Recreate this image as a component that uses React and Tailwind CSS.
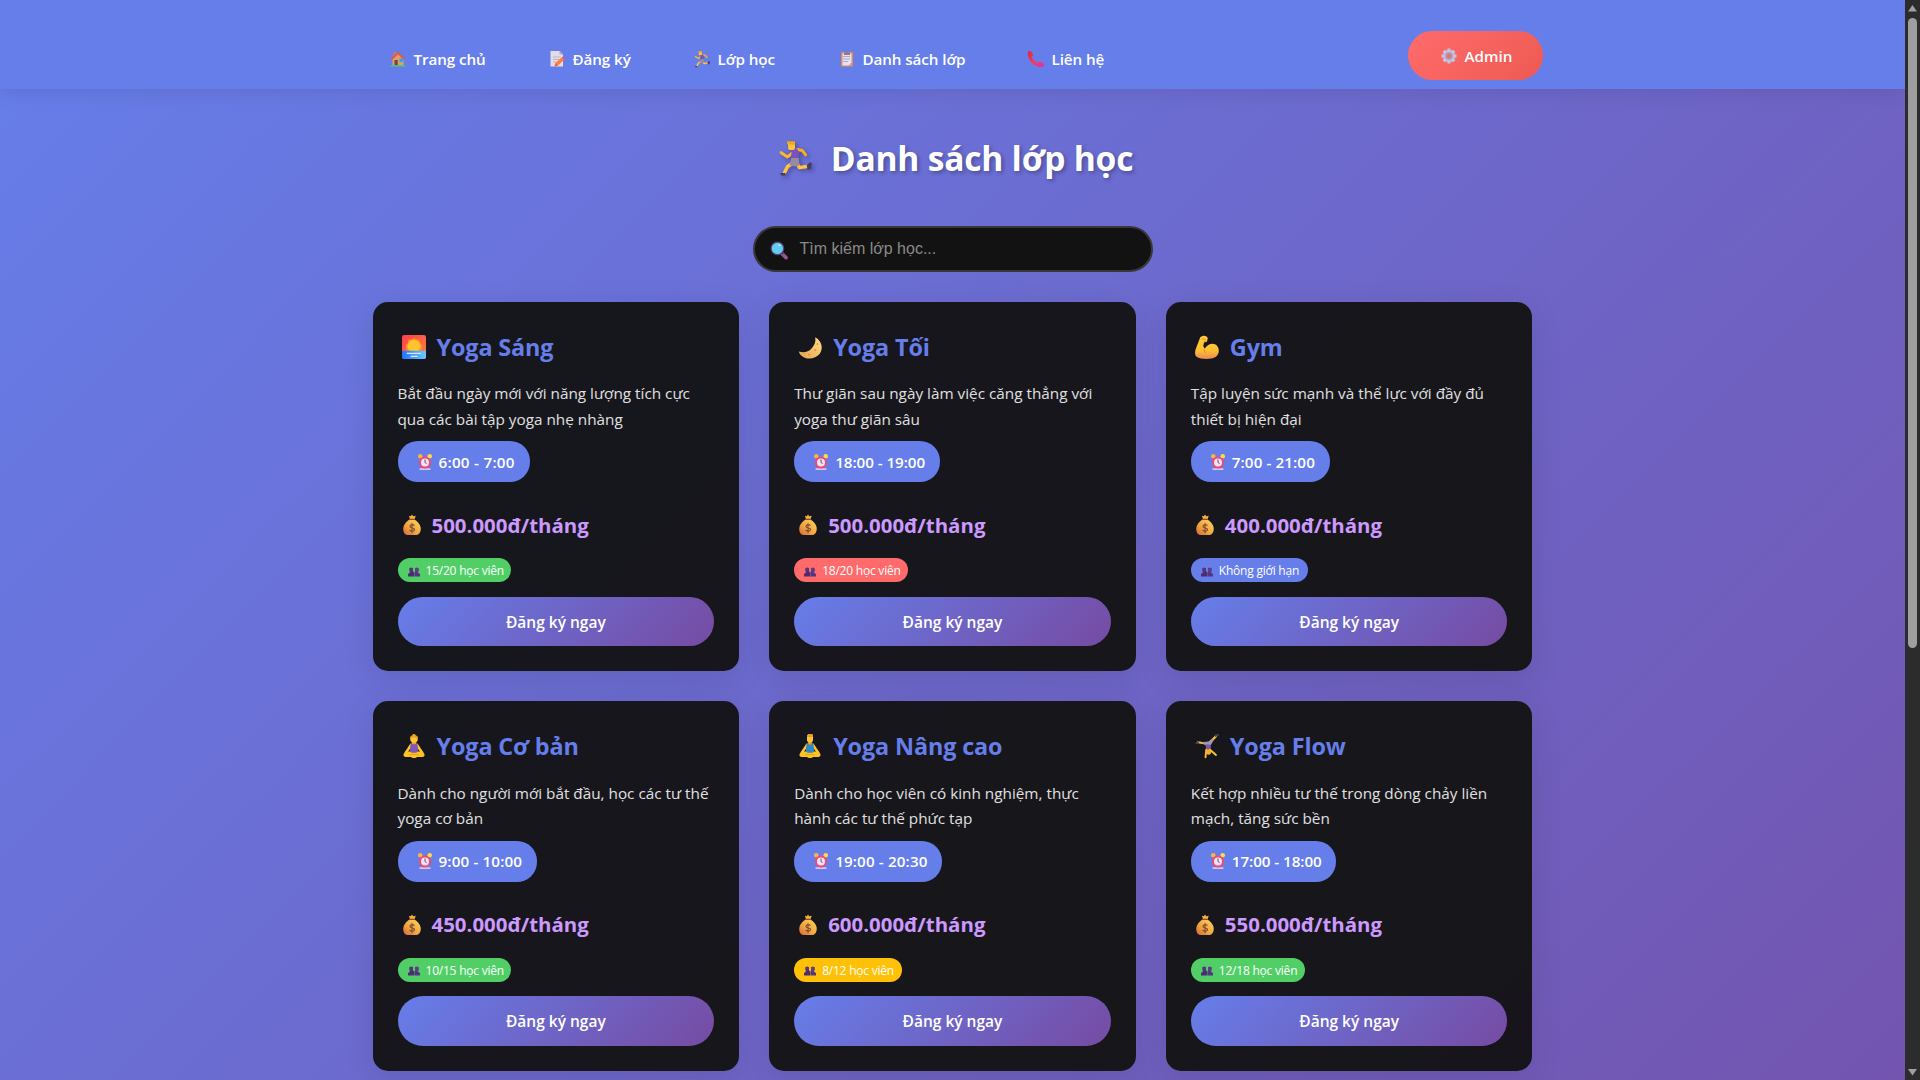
import React from "react";

const P = {
  home: (
    <>
      <rect x="7" y="2" width="5" height="9" fill="#b98064" />
      <path d="M5 14 16 5l11 9v15H5z" fill="#dba06d" />
      <path d="m2 15 14-13 14 13-2.400 2.400L16 6.800 4.400 17.400z" fill="#ee5338" />
      <rect x="9" y="18" width="6.500" height="11" fill="#7d4533" />
      <rect x="19" y="15" width="7" height="7" fill="#25a9ef" />
      <rect x="1" y="28.500" width="30" height="2.500" rx="1" fill="#37d67a" />
    </>
  ),
  memo: (
    <>
      <path d="M3 0h18l7 7v24H3z" fill="#e2dce9" />
      <path d="M21 0l7 7h-7z" fill="#b3a9c1" />
      <path d="M8 12h15M8 17h13M8 22h7" stroke="#b9afc5" strokeWidth="1.800" />
      <path d="m13 24 12-11 5 5-12 11-7 2z" fill="#ff8139" />
      <path d="m25 13 3-2 4 4-2 3z" fill="#f2546b" />
      <path d="m13 24 5 5-7 2z" fill="#e9604a" />
    </>
  ),
  run: (
    <>
      <path d="m14 11-5 4-6-4" fill="none" stroke="#ffb82e" strokeWidth="2.800" strokeLinecap="round" strokeLinejoin="round" />
      <path d="m18 8 5 1 3 4" fill="none" stroke="#f9ac25" strokeWidth="2.800" strokeLinecap="round" strokeLinejoin="round" />
      <path d="m14 21-5 3-3 6" fill="none" stroke="#ffc43c" strokeWidth="3.200" strokeLinecap="round" strokeLinejoin="round" />
      <path d="m18 21 2 4 7-1" fill="none" stroke="#ffc43c" strokeWidth="3.200" strokeLinecap="round" strokeLinejoin="round" />
      <path d="m13 8 5-1 2 4-1 6-7 0z" fill="#7a52b8" />
      <path d="m12.500 16 7 0 .5 7-3 1-6-1z" fill="#968b9f" />
      <path d="m2 30 5 0 0 2.500H3zM27 23l3-3 2 1-1 5-3 1z" fill="#483b69" />
      <rect x="9.500" y="1" width="6.500" height="7.500" rx="2.500" fill="#ffc23a" />
      <path d="M8.500 3V.3H16V3.500z" fill="#f3a51f" />
    </>
  ),
  clip: (
    <>
      <rect x="4" y="2" width="24" height="29" rx="1" fill="#d98e57" />
      <path d="M7 5h18v18l-5 6H7z" fill="#e8dff0" />
      <path d="M25 23v6h-5z" fill="#b9abc9" />
      <path d="M8 11h14M8 16h14M8 21h10" stroke="#ad9fbe" strokeWidth="1.800" />
      <path d="M10 3h4l1-3h3l1 3h3v5H10z" fill="#8b7998" />
    </>
  ),
  phone: (
    <>
      <defs>
        <linearGradient id="handset" x1="0" y1="0" x2="1" y2="1">
          <stop stopColor="#dd2442" />
          <stop offset=".5" stopColor="#f0405f" />
          <stop offset="1" stopColor="#e02fae" />
        </linearGradient>
      </defs>
      <path
        d="M2 0c4 0 8 5 8 8 0 2-3 3-2 5 2 4 6 8 10 10 2 1 3-2 5-2 4 0 9 4 9 8-1 4-9 4-13 2C9 27 2 19 0 10-.5 6-1 1 2 0z"
        fill="url(#handset)"
      />
    </>
  ),
  gear: (
    <>
      <path
        d="M13 1h6l1 5 4-3 5 5-3 4 5 1v6l-5 1 3 4-5 5-4-3-1 5h-6l-1-5-4 3-5-5 3-4-5-1v-6l5-1-3-4 5-5 4 3z"
        fill="#c9c0da"
      />
      <circle cx="16" cy="16" r="7.500" fill="#a69cb5" />
      <circle cx="16" cy="16" r="4" fill="#f46a68" />
    </>
  ),
  search: (
    <>
      <path d="m19 20 8 8" stroke="#97568f" strokeWidth="6" strokeLinecap="round" />
      <path d="m18 18 4 4" stroke="#57366b" strokeWidth="4" />
      <circle cx="12.500" cy="12.500" r="10.500" fill="#62cdf0" stroke="#504878" strokeWidth="2" />
      <ellipse cx="16" cy="7" rx="2" ry="1.500" fill="#b6effc" />
    </>
  ),
  sunrise: (
    <>
      <defs>
        <linearGradient id="dawn" x1="0" y1="0" x2="1" y2="1">
          <stop stopColor="#ff3e4b" />
          <stop offset="1" stopColor="#ff8243" />
        </linearGradient>
        <linearGradient id="sea">
          <stop stopColor="#1b76ff" />
          <stop offset="1" stopColor="#68caff" />
        </linearGradient>
      </defs>
      <rect width="32" height="32" rx="3" fill="url(#dawn)" />
      <path d="m16 4 3 2 4 0 1 4 3 4-1 7H6l-1-7 3-4 1-4h4z" fill="#ff941f" />
      <circle cx="16" cy="15" r="8.500" fill="#ffc42e" />
      <path d="M0 21h32v8a3 3 0 0 1-3 3H3a3 3 0 0 1-3-3z" fill="url(#sea)" />
      <path d="M7 24.500h18M12 28.500h8" stroke="#e7dcff" strokeWidth="1.500" strokeLinecap="round" />
    </>
  ),
  moon: (
    <>
      <defs>
        <linearGradient id="moonlight" x1="0" y1="1" x2="1" y2="0">
          <stop stopColor="#e8a354" />
          <stop offset="1" stopColor="#ffdc83" />
        </linearGradient>
      </defs>
      <path d="M23 3c9 5 11 15 6 22-7 9-24 9-28-3 6 2 13 1 17-4 4-4 6-9 5-15z" fill="url(#moonlight)" />
      <g fill="#d99745">
        <circle cx="26" cy="12" r="1.300" />
        <circle cx="23" cy="20" r="1.500" />
        <circle cx="15" cy="26" r="1.500" />
        <circle cx="9" cy="25" r="1" />
      </g>
    </>
  ),
  arm: (
    <>
      <defs>
        <linearGradient id="skin" x1="0" y1="0" x2="0" y2="1">
          <stop stopColor="#ffcf35" />
          <stop offset=".65" stopColor="#ffbd32" />
          <stop offset="1" stopColor="#e8895a" />
        </linearGradient>
      </defs>
      <path
        d="M7 3c3-3 8-3 10 1l-1 5-4 1-1 5 2 3c4-6 10-8 15-5 5 4 5 12 0 16-6 4-20 4-26 0-3-3-2-8 0-13z"
        fill="url(#skin)"
      />
      <path d="M13 18c-1 2-1 4 1 6M9 5l5 1M12 9l3-1" stroke="#e28b25" strokeWidth="1.300" fill="none" />
    </>
  ),
  lotusWoman: (
    <>
      <path d="M12 14.500 8.500 20 5 25M20 14.500l3.500 5.500 3.500 5" fill="none" stroke="#ffc62f" strokeWidth="3.400" strokeLinecap="round" strokeLinejoin="round" />
      <path d="M2 27c1-3 7-4 10-4h8c3 0 9 1 10 4 .5 2-1 3.500-3 3.500h-7L18 32h-4l-2-1.500H5c-2 0-3.500-1.500-3-3.500z" fill="#ffc321" />
      <path d="M11.500 13h9l1 10-2.500 2h-6l-2.500-2z" fill="#8057b7" />
      <path d="M13 9h6v4.500h-6z" fill="#f0a21c" />
      <ellipse cx="16" cy="6.800" rx="5" ry="5" fill="#ffc43b" />
      <path d="M11 7c-1-3 1-5 3-5.500 0-2 4-2 4 0 2 .5 4 2.500 3 5.500-3-3-7-3-10 0z" fill="#e8a31d" />
      <path d="m10 28 6-1 6 1" stroke="#dd941d" fill="none" />
    </>
  ),
  lotusMan: (
    <>
      <path d="M12 14.500 8.500 20 5 25M20 14.500l3.500 5.500 3.500 5" fill="none" stroke="#ffc62f" strokeWidth="3.400" strokeLinecap="round" strokeLinejoin="round" />
      <path d="M2 27c1-3 7-4 10-4h8c3 0 9 1 10 4 .5 2-1 3.500-3 3.500h-7L18 32h-4l-2-1.500H5c-2 0-3.500-1.500-3-3.500z" fill="#ffc321" />
      <path d="M11.500 13l2-1 2.500 3 2.500-3 2 1 1 10-2 2h-7l-2-2z" fill="#2d89c9" />
      <path d="M13.500 8h5v5L16 15l-2.500-2z" fill="#f0a21c" />
      <rect x="12" y="0" width="8" height="11" rx="3.500" fill="#ffc43b" />
      <path d="M12 4V1.500L14 0h5l1 1.500V4z" fill="#e8a31d" />
      <path d="m10 28 6-1 6 1" stroke="#dd941d" fill="none" />
    </>
  ),
  wheel: (
    <>
      <path d="m16 13-12-2M19 12l9-9" stroke="#ffc22f" strokeWidth="3" strokeLinecap="round" />
      <path d="m8 11 10-1 5-4 2 2-4 7h-7z" fill="#a19aaf" />
      <path d="M14 14h7v8h-6z" fill="#8055b2" />
      <path d="m15 21-1 10M20 21l8 7" stroke="#ffc22f" strokeWidth="2.500" strokeLinecap="round" />
      <circle cx="18" cy="24" r="3.500" fill="#f7b126" />
      <path d="m0 12 5-3v4H1zM26 1l6-1v2l-5 2z" fill="#4c3f68" />
    </>
  ),
  clock: (
    <>
      <circle cx="6.500" cy="4.500" r="4.500" fill="#f9b443" />
      <circle cx="25.500" cy="4.500" r="4.500" fill="#ffdb45" />
      <rect x="5" y="28.500" width="22" height="3.500" rx="1" fill="#dcc5eb" />
      <circle cx="16" cy="17" r="12" fill="#f4496c" />
      <circle cx="16" cy="17" r="8" fill="#f1e3fa" />
      <path d="M16 11v6l3 2" stroke="#6a4578" strokeWidth="2" fill="none" />
    </>
  ),
  money: (
    <>
      <defs>
        <linearGradient id="sack" x1="1" y1="0" x2="0" y2="1">
          <stop stopColor="#ffd45b" />
          <stop offset=".6" stopColor="#f0a33c" />
          <stop offset="1" stopColor="#d0653f" />
        </linearGradient>
      </defs>
      <path d="M11 1l3 1 2-3 2 3 4-1-2 6h-7z" fill="#f6ad3b" />
      <path d="M11 6h10v3H11z" fill="#825043" />
      <path d="M11 8h10c5 3 9 9 9 14 0 7-4 10-8 10H10c-5 0-8-3-8-10 0-5 4-11 9-14z" fill="url(#sack)" />
      <path d="M20 17c-3-3-8-1-7 2s7 1 7 4-5 4-8 1M16 13v16" stroke="#84503b" strokeWidth="2" fill="none" />
    </>
  ),
  users: (
    <>
      <path d="M4 5h9v8l3 4v11H0v-7l5-4z" fill="#4c2d72" />
      <path d="M19 5h9v9l-2 3 6 4v7H17V17l3-4z" fill="#533580" />
      <rect x="4" y="4" width="9" height="12" rx="4" fill="#53357b" />
      <rect x="19" y="4" width="9" height="12" rx="4" fill="#5e3d88" />
    </>
  ),
};

function Emoji({ name, className }) {
  return (
    <svg viewBox="0 0 32 32" className={"block shrink-0 overflow-visible " + className} aria-hidden="true">
      {P[name]}
    </svg>
  );
}

const nav = [
  { icon: "home", label: "Trang chủ", item: "w-[159px]" },
  { icon: "memo", label: "Đăng ký", item: "w-[145px]" },
  { icon: "run", label: "Lớp học", item: "w-[145px]" },
  { icon: "clip", label: "Danh sách lớp", item: "w-[189px]" },
  { icon: "phone", label: "Liên hệ", item: "w-[100px]" },
];

const green = "bg-[#51cf66]";
const classes = [
  { icon: "sunrise", name: "Yoga Sáng", lines: ["Bắt đầu ngày mới với năng lượng tích cực", "qua các bài tập yoga nhẹ nhàng"], time: "6:00 - 7:00", timeW: "w-[132px]", timeT: "tracking-[0.28px]", price: "500.000đ/tháng", seats: "15/20 học viên", seatW: "w-[113px]", tone: green },
  { icon: "moon", name: "Yoga Tối", lines: ["Thư giãn sau ngày làm việc căng thẳng với", "yoga thư giãn sâu"], time: "18:00 - 19:00", timeW: "w-[146px]", timeT: "tracking-[-0.05px]", price: "500.000đ/tháng", seats: "18/20 học viên", seatW: "w-[114px]", tone: "bg-[#ff6b6b]" },
  { icon: "arm", name: "Gym", lines: ["Tập luyện sức mạnh và thể lực với đầy đủ", "thiết bị hiện đại"], time: "7:00 - 21:00", timeW: "w-[139px]", timeT: "tracking-[0.1px]", price: "400.000đ/tháng", seats: "Không giới hạn", seatW: "w-[117px]", tone: "bg-[#667eea]" },
  { icon: "lotusWoman", name: "Yoga Cơ bản", lines: ["Dành cho người mới bắt đầu, học các tư thế", "yoga cơ bản"], time: "9:00 - 10:00", timeW: "w-[139px]", timeT: "tracking-[0.15px]", price: "450.000đ/tháng", seats: "10/15 học viên", seatW: "w-[113px]", tone: green },
  { icon: "lotusMan", name: "Yoga Nâng cao", lines: ["Dành cho học viên có kinh nghiệm, thực", "hành các tư thế phức tạp"], time: "19:00 - 20:30", timeW: "w-[148px]", timeT: "tracking-[0.14px]", price: "600.000đ/tháng", seats: "8/12 học viên", seatW: "w-[108px]", tone: "bg-[#ffc107]" },
  { icon: "wheel", name: "Yoga Flow", lines: ["Kết hợp nhiều tư thế trong dòng chảy liền", "mạch, tăng sức bền"], time: "17:00 - 18:00", timeW: "w-[145px]", timeT: "tracking-[-0.05px]", price: "550.000đ/tháng", seats: "12/18 học viên", seatW: "w-[114px]", tone: green },
];

function ClassCard({ c }) {
  return (
    <article className="h-[369.400px] rounded-[15px] bg-[rgba(18,18,18,0.95)] px-[25px] pt-[25px] shadow-[0_8px_32px_rgba(0,0,0,0.1)]">
      <h3 className="flex h-[40px] items-center whitespace-nowrap text-[23.400px] font-bold tracking-[-0.130px] text-[#667eea]">
        <Emoji name={c.icon} className="ml-1 mr-[11px] size-6" />
        <span className="pt-px">{c.name}</span>
      </h3>
      <p className="mt-[14.400px] whitespace-nowrap text-[15.300px] leading-[25.600px] text-[#e0e0e0]">
        {c.lines[0]}
        <br />
        {c.lines[1]}
      </p>
      <div className={"mt-[8.600px] flex h-[41px] items-center whitespace-nowrap rounded-[20px] bg-[#667eea] pl-[19px] text-[15.200px] font-semibold text-white " + c.timeW + " " + c.timeT}>
        <Emoji name="clock" className="mr-[6px] size-4" />
        <span className="pt-px">{c.time}</span>
      </div>
      <div className="mt-[26px] flex h-[34px] items-center whitespace-nowrap text-[20.450px] font-bold text-[#cc99ff]">
        <Emoji name="money" className="ml-1 mr-[10px] size-5" />
        {c.price}
      </div>
      <div className={"mt-[16px] flex h-6 items-center whitespace-nowrap rounded-[12px] pl-[10px] text-[12px] tracking-[-0.220px] text-white " + c.tone + " " + c.seatW}>
        <Emoji name="users" className="mr-[6px] mt-[3px] size-3" />
        <span className="pt-0.5">{c.seats}</span>
      </div>
      <button className="mt-[14.600px] flex h-[49.400px] w-full items-center justify-center rounded-[25px] bg-[linear-gradient(135deg,#667eea_0%,#764ba2_100%)] text-[15.500px] font-semibold text-white">
        <span className="pt-0.5">Đăng ký ngay</span>
      </button>
    </article>
  );
}

export default function App() {
  return (
    <div className="flex h-[1080px] w-[1920px] overflow-hidden font-['Open_Sans','Noto_Sans',sans-serif]">
      <div className="h-[1791px] w-[1905px] bg-[linear-gradient(135deg,#667eea_0%,#764ba2_100%)]">
        <header className="h-[89px] bg-[#667eea] shadow-[0_2px_20px_rgba(0,0,0,0.1)]">
          <div className="mx-auto flex w-[1200px] items-start justify-between pl-[37px] pt-[31px]">
            <nav className="flex pt-[16px]">
              {nav.map((n) => (
                <a key={n.label} className={"flex h-6 items-center whitespace-nowrap text-[15.200px] font-semibold tracking-[-0.08px] text-white " + n.item}>
                  <Emoji name={n.icon} className="mr-[8px] size-4" />
                  <span>{n.label}</span>
                </a>
              ))}
            </nav>
            <button className="mr-[10px] flex h-[49px] w-[135px] items-center rounded-[25px] bg-[linear-gradient(135deg,#ff6b6b_0%,#ee5a52_100%)] pl-[33px] text-[15.200px] font-semibold text-white">
              <Emoji name="gear" className="mr-[8px] size-4" />
              <span className="pt-0.5">Admin</span>
            </button>
          </div>
        </header>
        <main className="mx-auto w-[1160px] pt-[39px]">
          <h1 className="flex h-[60px] items-center justify-center pl-[6px] text-[33.600px] font-bold tracking-[-0.220px] text-white">
            <Emoji name="run" className="mr-[19px] size-[34px] drop-shadow-[2px_2px_2px_rgba(0,0,0,0.3)]" />
            <span className="[text-shadow:2px_2px_4px_rgba(0,0,0,0.3)]">Danh sách lớp học</span>
          </h1>
          <div className="mx-auto mt-[38px] flex h-[46px] w-[400px] items-center rounded-[25px] border-2 border-[#383838] bg-[#121212] pl-[15px] font-['Liberation_Sans',sans-serif] text-[16px] text-[#8a8a8a]">
            <Emoji name="search" className="mr-[11px] mt-[2px] size-[19px]" />
            Tìm kiếm lớp học...
          </div>
          <section className="mt-[30px] grid grid-cols-3 gap-[30px]">
            {classes.map((c) => (
              <ClassCard key={c.name} c={c} />
            ))}
          </section>
        </main>
      </div>
      <aside className="flex h-[1080px] w-[15px] flex-col items-center bg-[#2c2c2c]">
        <svg viewBox="0 0 15 18" className="h-[18px] w-[15px]">
          <path d="M7.500 5 12 11.500H3z" fill="#9f9f9f" />
        </svg>
        <div className="h-[630px] w-[9px] rounded-full bg-[#9f9f9f]" />
        <svg viewBox="0 0 15 18" className="mt-auto h-[18px] w-[15px]">
          <path d="M7.500 13.500 12 7H3z" fill="#9f9f9f" />
        </svg>
      </aside>
    </div>
  );
}
